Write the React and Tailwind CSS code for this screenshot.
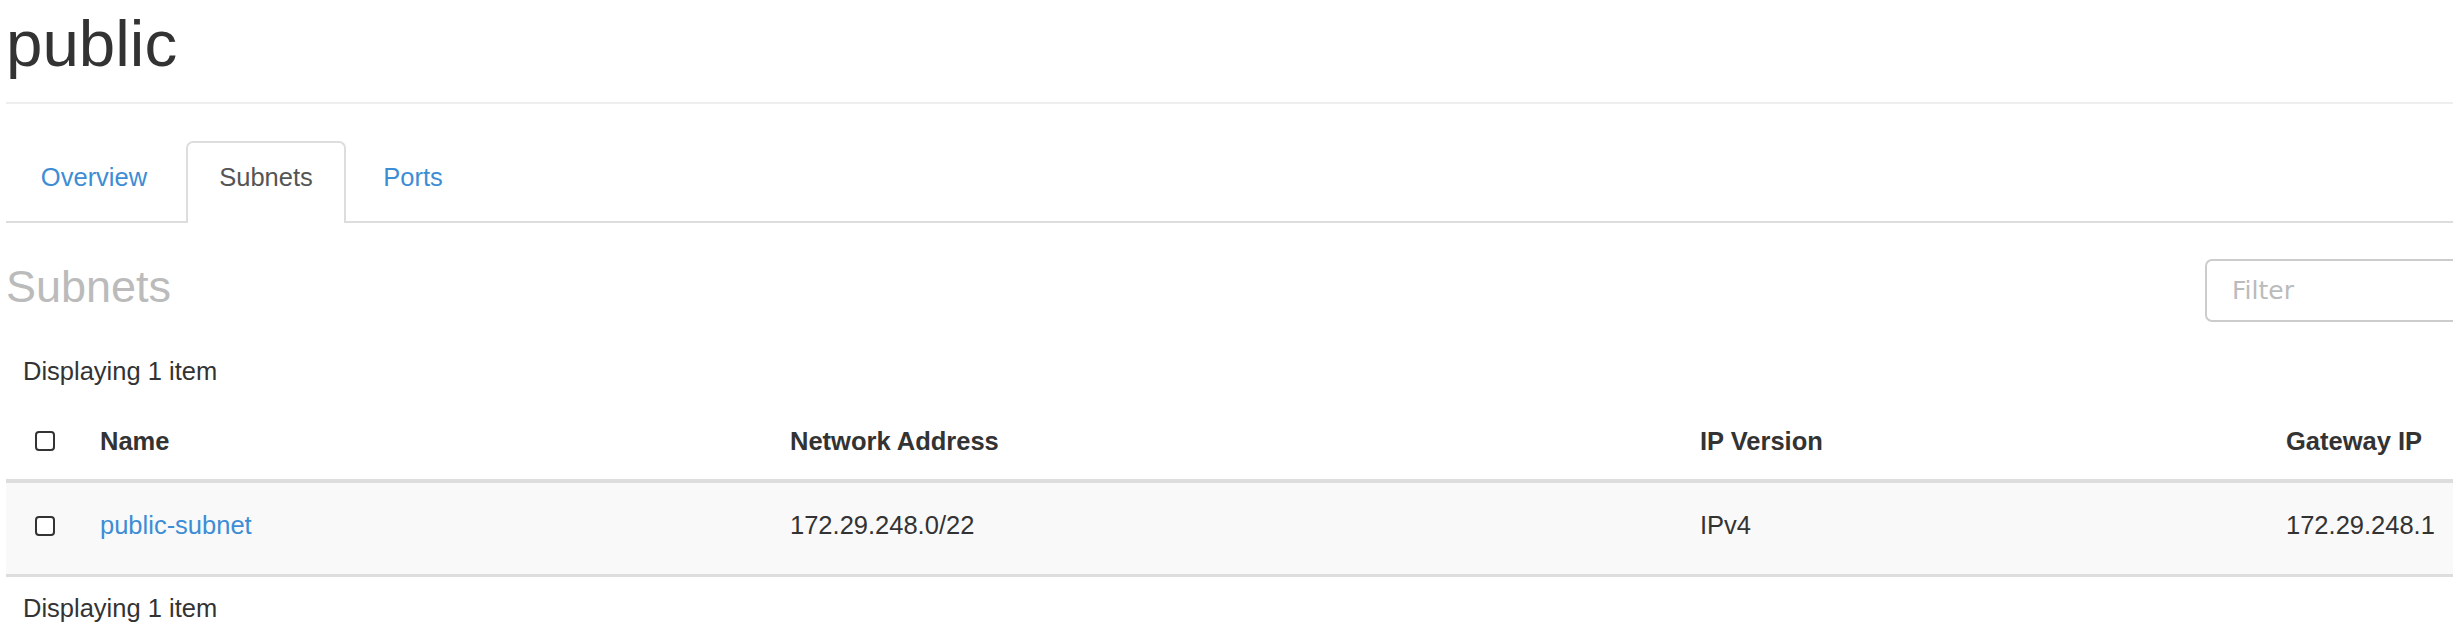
const SANS = "font-['Liberation_Sans',Arial,sans-serif]";

const COLS = 'grid grid-cols-[94px_690px_910px_586px_1fr]';

function Checkbox() {
  return <span className="block h-[20px] w-[20px] rounded-[4px] border-2 border-[#333] bg-white" />;
}

function Tab({ label, active, width }) {
  if (active) {
    return (
      <div
        className={`${width} -mb-[2px] h-[82px] rounded-t-[7px] border-2 border-b-0 border-[#ddd] bg-white pt-[16px] text-center leading-[36px] text-[#555]`}
      >
        {label}
      </div>
    );
  }
  return (
    <div className={`${width} h-[80px] border-2 border-transparent pt-[16px] text-center leading-[36px] text-[#3d8dd5]`}>
      {label}
    </div>
  );
}

export default function App() {
  const rows = [
    { name: 'public-subnet', cidr: '172.29.248.0/22', version: 'IPv4', gateway: '172.29.248.1' },
  ];

  return (
    <div className={`w-[2453px] overflow-hidden bg-white ${SANS} text-[25.5px] text-[#333]`}>
      <div className="w-[2700px] pl-[6px]">
        {/* page header */}
        <div className="border-b-2 border-[#eee] pt-[8px] pb-[22px]">
          <h1 className="text-[65.5px] leading-[72px]">public</h1>
        </div>

        {/* tabs */}
        <div className="mt-[37px] flex gap-[4px] border-b-2 border-[#ddd]">
          <Tab label="Overview" width="w-[176px]" />
          <Tab label="Subnets" width="w-[160px]" active />
          <Tab label="Ports" width="w-[126px]" />
        </div>

        {/* table heading + filter */}
        <div className="mt-[36px] flex items-start justify-between">
          <h3 className="mt-[3px] text-[45px] leading-[50px] text-[#bbb]">Subnets</h3>
          <div className="h-[63px] w-[495px] rounded-[7px] border-2 border-[#ccc] pl-[25px] font-['DejaVu_Sans',sans-serif] text-[25px] leading-[59px] text-[#bbb]">
            Filter
          </div>
        </div>

        <div className="mt-[31px] pl-[17px] leading-[36px]">Displaying 1 item</div>

        {/* header row */}
        <div className={`${COLS} border-b-4 border-[#ddd] pt-[34px] pb-[20px] font-bold`}>
          <div className="flex items-center pl-[29px]"><Checkbox /></div>
          <div className="leading-[36px]">Name</div>
          <div className="leading-[36px]">Network Address</div>
          <div className="leading-[36px]">IP Version</div>
          <div className="leading-[36px]">Gateway IP</div>
        </div>

        {rows.map((r) => (
          <div key={r.name} className={`${COLS} border-b-[3px] border-[#ddd] bg-[#f9f9f9] pt-[24px] pb-[31px]`}>
            <div className="flex items-center pl-[29px] pt-[2px]"><Checkbox /></div>
            <div className="leading-[36px] text-[#3d8dd5]">{r.name}</div>
            <div className="leading-[36px]">{r.cidr}</div>
            <div className="leading-[36px]">{r.version}</div>
            <div className="leading-[36px]">{r.gateway}</div>
          </div>
        ))}

        <div className="pt-[13px] pl-[17px] leading-[36px]">Displaying 1 item</div>
      </div>
    </div>
  );
}
